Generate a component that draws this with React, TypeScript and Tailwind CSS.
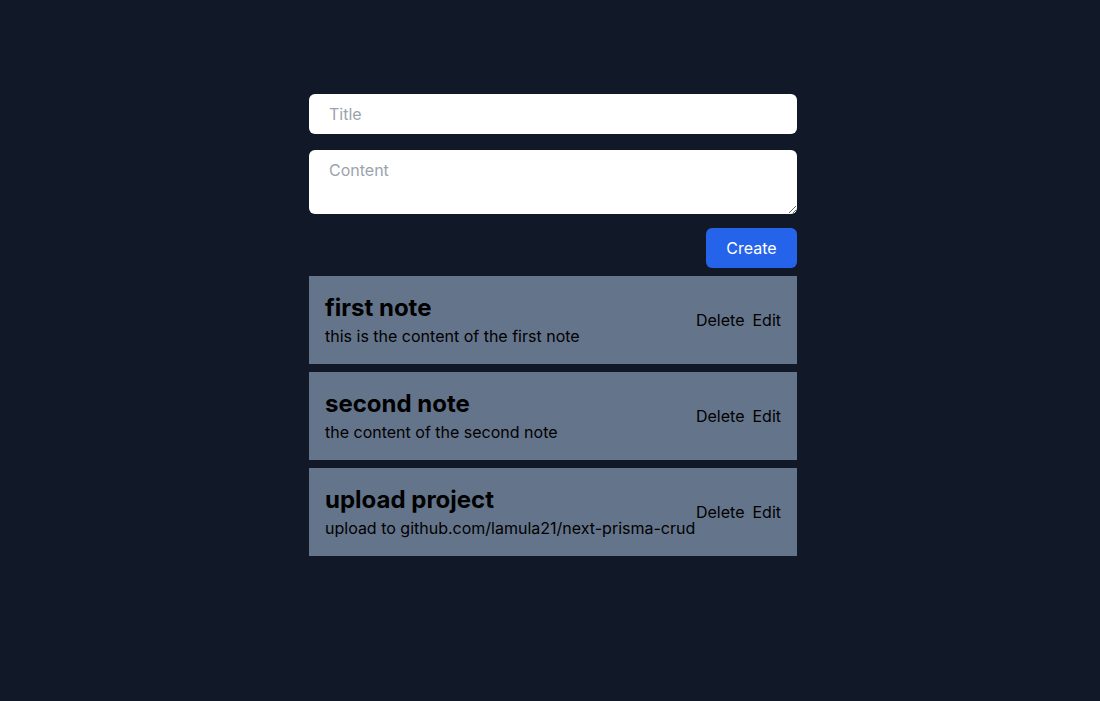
import React from 'react';

const notes = [
  { id: 1, title: 'first note', content: 'this is the content of the first note' },
  { id: 2, title: 'second note', content: 'the content of the second note' },
  { id: 3, title: 'upload project', content: 'upload to github.com/lamula21/next-prisma-crud' },
];

const App = () => {
  return (
    <main className="min-h-[701px] bg-[#111827] font-['Inter',sans-serif] flex justify-center pl-[6px] pt-[94px]">
      <div className="w-[488px] flex flex-col">
        <form className="flex flex-col" onSubmit={(e) => e.preventDefault()}>
          <input
            type="text"
            placeholder="Title"
            className="h-10 w-full rounded-md bg-white px-5 text-base text-black placeholder:text-[#9ca3af] outline-none"
          />
          <textarea
            rows={2}
            placeholder="Content"
            className="mt-4 block h-16 w-full rounded-md bg-white px-5 py-2 text-base text-black placeholder:text-[#9ca3af] outline-none"
          />
          <div className="mt-[14px] flex justify-end">
            <button className="h-10 w-[91px] rounded-md bg-[#2563eb] text-base text-white">Create</button>
          </div>
        </form>
        <ul className="mt-2 flex flex-col gap-2">
          {notes.map((note) => (
            <li key={note.id} className="flex items-center justify-between bg-[#64748b] p-4">
              <div className="whitespace-nowrap">
                <h3 className="text-2xl font-bold text-black">{note.title}</h3>
                <p className="text-base text-black">{note.content}</p>
              </div>
              <div className="flex gap-2 whitespace-nowrap text-base text-black">
                <button>Delete</button>
                <button>Edit</button>
              </div>
            </li>
          ))}
        </ul>
      </div>
    </main>
  );
};

export default App;
